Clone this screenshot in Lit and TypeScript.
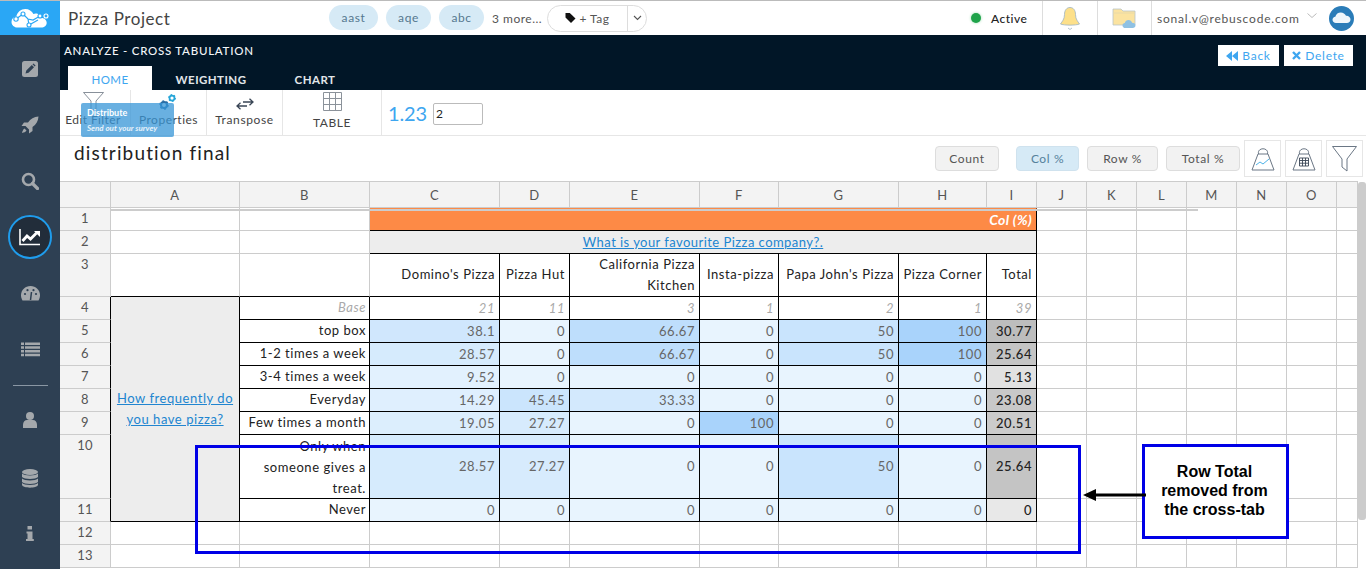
import { LitElement, html, css, svg } from "lit";
import { customElement } from "lit/decorators.js";

type Row = { n: number; label: string; vals: number[]; total: number };

const rows: Row[] = [
  { n: 5, label: "top box", vals: [38.1, 0, 66.67, 0, 50, 100], total: 30.77 },
  { n: 6, label: "1-2 times a week", vals: [28.57, 0, 66.67, 0, 50, 100], total: 25.64 },
  { n: 7, label: "3-4 times a week", vals: [9.52, 0, 0, 0, 0, 0], total: 5.13 },
  { n: 8, label: "Everyday", vals: [14.29, 45.45, 33.33, 0, 0, 0], total: 23.08 },
  { n: 9, label: "Few times a month", vals: [19.05, 27.27, 0, 100, 0, 0], total: 20.51 },
  { n: 10, label: "Only when someone gives a treat.", vals: [28.57, 27.27, 0, 0, 50, 0], total: 25.64 },
  { n: 11, label: "Never", vals: [0, 0, 0, 0, 0, 0], total: 0 },
];
const colHeads = ["A", "B", "C", "D", "E", "F", "G", "H", "I", "J", "K", "L", "M", "N", "O", ""];
const brands = ["Domino's Pizza", "Pizza Hut", "California Pizza Kitchen", "Insta-pizza", "Papa John's Pizza", "Pizza Corner", "Total"];
const bases = [21, 11, 3, 1, 2, 1, 39];

const blue = (v: number) => {
  const t = v / 100;
  const m = (a: number, b: number) => Math.round(a + (b - a) * t);
  return `background-color: rgb(${m(232, 169)},${m(244, 211)},${m(254, 251)})`;
};
const grey = (v: number) => {
  const g = Math.round(232 - v * 1.4);
  return `background-color: rgb(${g},${g},${g})`;
};

const blanks = (n: number) => Array.from({ length: n }, () => html`<div class="c"></div>`);

@customElement("app-root")
export class AppRoot extends LitElement {
  static styles = css`
    :host { display: block; width: 1366px; height: 569px; overflow: hidden; position: relative; font-family: "Lato", "Noto Sans", sans-serif; background: #fff; color: #333; }
    .app { display: flex; width: 1366px; height: 569px; }
    .side { width: 60px; flex: none; background: #2e4053; display: flex; flex-direction: column; align-items: center; }
    .logo { width: 60px; height: 35px; background: #2aa7f5; border-top: 1px solid #bbb; box-sizing: border-box; display: flex; align-items: center; justify-content: center; flex: none; }
    .nav { height: 56px; width: 60px; box-sizing: border-box; display: flex; align-items: center; justify-content: center; flex: none; }
    .nav svg { display: block; }
    .nav.first { margin-top: 6px; }
    .nav.db { padding-top: 4px; }
    .nav.info { padding-top: 2px; }
    .ring { width: 44px; height: 44px; border-radius: 50%; border: 2px solid #1f9cec; box-sizing: border-box; background: #222d3a; display: flex; align-items: center; justify-content: center; }
    .rule { width: 35px; height: 1px; background: #8a97a4; margin: 8px 0 6px; flex: none; }
    .main { width: 1306px; flex: none; display: flex; flex-direction: column; }

    .top { height: 35px; flex: none; box-sizing: border-box; border-top: 1px solid #bbb; display: flex; align-items: center; padding-left: 8px; }
    .proj { font-size: 17px; letter-spacing: 0.55px; color: #444; width: 261px; flex: none; }
    .chip { height: 25px; box-sizing: border-box; border-radius: 13px; background: #d6eaf6; color: #55788f; font-size: 12px; letter-spacing: 0.6px; display: flex; align-items: center; justify-content: center; margin-right: 8px; margin-top: -1px; flex: none; }
    .more { font-size: 12px; letter-spacing: 0.5px; color: #555; width: 55px; flex: none; }
    .tag { width: 100px; height: 27px; box-sizing: border-box; border: 1px solid #ddd; border-radius: 14px; display: flex; align-items: center; flex: none; }
    .tag-l { width: 79px; flex: none; border-right: 1px solid #ddd; height: 100%; display: flex; align-items: center; justify-content: center; gap: 3px; font-size: 12px; color: #555; letter-spacing: .5px; }
    .tag-r { flex: 1; display: flex; align-items: center; justify-content: center; }
    .status { margin-left: 324px; width: 71px; flex: none; height: 34px; display: flex; align-items: center; gap: 10px; font-size: 12px; color: #222; letter-spacing: .5px; font-weight: 500; }
    .dot { width: 10px; height: 10px; border-radius: 50%; background: #1fa34a; box-shadow: 0 0 3px #9ddbb0; }
    .tb-ic { height: 34px; display: flex; align-items: center; justify-content: center; border-left: 1px solid #ddd; flex: none; }
    .bell { width: 54px; }
    .folder { width: 53px; }
    .email { border-left: 1px solid #ddd; height: 34px; display: flex; align-items: center; padding-left: 5px; width: 170px; box-sizing: border-box; font-size: 12px; letter-spacing: .8px; color: #555; flex: none; gap: 7px; white-space: nowrap; }
    .email svg { flex: none; margin-top: -5px; }
    .avatar { margin-left: 8px; flex: none; display: block; }

    .dark { height: 55px; flex: none; background: #011627; display: flex; flex-direction: column; position: relative; }
    .dark-top { display: flex; justify-content: space-between; height: 31px; flex: none; }
    .crumb { color: #f2f5f8; font-size: 11.5px; letter-spacing: .75px; padding: 9px 0 0 4px; font-weight: 500; }
    .btns { display: flex; gap: 5px; padding: 10px 13px 0 0; }
    .btn { background: #fff; height: 21px; display: flex; align-items: center; justify-content: center; gap: 4px; color: #3ea6f0; font-size: 12px; letter-spacing: .7px; }
    .btn.back { width: 61px; }
    .btn.del { width: 69px; }
    .tabs { display: flex; padding-left: 8px; flex: none; }
    .tab { height: 24px; display: flex; align-items: center; justify-content: center; font-size: 11.5px; letter-spacing: .45px; color: #e2e6ea; font-weight: 700; box-sizing: border-box; padding-top: 2px; }
    .tab.on { background: #fff; color: #3ea6f0; width: 84px; font-weight: 400; }
    .tab.w { width: 118px; }
    .tab.ch { width: 90px; }

    .tools { height: 46px; flex: none; box-sizing: border-box; border-bottom: 1px solid #e6e6e6; display: flex; align-items: stretch; position: relative; }
    .tool { display: flex; flex-direction: column; align-items: center; justify-content: flex-end; box-sizing: border-box; border-right: 1px solid #e6e6e6; font-size: 12px; letter-spacing: .5px; color: #444; padding-bottom: 8px; flex: none; }
    .tool svg { display: block; }
    .t1 { width: 71px; padding-right: 4px; letter-spacing: .4px; }
    .t2 { width: 76px; }
    .t3 { width: 76px; gap: 2px; letter-spacing: .62px; }
    .t4 { width: 99px; padding-bottom: 5px; letter-spacing: .6px; gap: 4px; }
    .num { color: #3ea6f0; font-size: 20px; margin-left: 6px; align-self: center; width: 45px; letter-spacing: -.1px; }
    .inp { width: 50px; height: 22px; box-sizing: border-box; border: 1px solid #bbb; border-radius: 2px; align-self: center; font-size: 12px; color: #222; padding-left: 2px; display: flex; align-items: center; margin-top: 2px; background: #fff; }
    .tip { position: absolute; left: 21px; top: 13px; width: 93px; height: 34px; background: rgba(55,150,215,.75); border-radius: 2px; color: #fff; box-sizing: border-box; padding: 4px 6px; display: flex; flex-direction: column; justify-content: space-between; }
    .tip b { font-size: 9px; font-weight: 700; }
    .tip i { font-size: 8px; font-weight: 700; color: #e8f3fb; }
    .gears { position: absolute; left: 97px; top: 1px; display: block; }

    .title-row { height: 45px; flex: none; box-sizing: border-box; display: flex; align-items: flex-start; }
    .title { font-size: 19px; letter-spacing: 1.15px; color: #222; margin: 5px 0 0 14px; width: 861px; flex: none; }
    .pill { height: 25px; margin-top: 10px; box-sizing: border-box; border: 1px solid #ddd; border-radius: 4px; background: #f2f2f2; font-size: 12px; letter-spacing: .6px; color: #555; display: flex; align-items: center; justify-content: center; padding-bottom: 1px; flex: none; }
    .p-count { width: 64px; margin-right: 17px; }
    .p-col { width: 63px; margin-right: 8px; background: #d6eaf6; border-color: #cfe2ee; color: #55819c; }
    .p-row { width: 71px; margin-right: 8px; }
    .p-tot { width: 74px; margin-right: 4px; }
    .sq { width: 37px; height: 37px; margin: 4px 4px 0 0; box-sizing: border-box; border: 1px solid #e6e6e6; display: flex; align-items: center; justify-content: center; flex: none; }
    .sq.last { margin-right: 0; }

    .sheet { flex: 1; min-height: 0; overflow: hidden; display: grid; grid-template-columns: 51px 129px 130px 130px 70px 130px 79px 120px 88px 50px 50px 50px 50px 50px 50px 50px 21px; grid-auto-rows: 23px; grid-template-rows: 27px 23px 23px 43px repeat(6, 23px) 64px 23px 23px 23px 23px; width: 1298px; }
    .c, .h, .rn, .d, .lb { box-sizing: border-box; border-right: 1px solid #ccc; border-bottom: 1px solid #ccc; font-size: 13px; letter-spacing: .55px; }
    .h { background: #f3f3f3; border-top: 1px solid #ccc; display: flex; align-items: center; justify-content: center; color: #555; }
    .rn { background: #f3f3f3; color: #555; text-align: center; padding-top: 1px; line-height: 18px; letter-spacing: .3px; }
    .rn.bk { border-right-color: #000; }
    .d { border-color: #000; display: flex; align-items: center; justify-content: flex-end; padding: 0 4px 1px 0; color: #666; white-space: nowrap; }
    .lb { border-color: #000; display: flex; align-items: center; justify-content: flex-end; text-align: right; padding: 0 3px 1px 8px; color: #222; line-height: 21px; }
    .lb.tall { padding: 1px 3px 0 8px; }
    .bb { border-bottom-color: #000; }
    .orange { grid-column: span 7; background: #fd8a46; color: #fff; font-weight: 700; font-style: italic; border-right: 1px solid #000; border-bottom: 1px solid #000; border-top: 1px solid #fd8a46; display: flex; align-items: center; justify-content: flex-end; padding: 0 4px 0 0; font-size: 14px; box-sizing: border-box; letter-spacing: .35px; }
    .q { grid-column: span 7; background: #ededed; border-right: 1px solid #000; border-bottom: 1px solid #000; box-sizing: border-box; display: flex; align-items: center; justify-content: center; padding-bottom: 1px; font-size: 13px; letter-spacing: .45px; }
    a { color: #2185d0; text-decoration: underline; }
    .hd { color: #222; line-height: 21px; text-align: right; padding-left: 1px; white-space: normal; }
    .it { font-style: italic; color: #aaa; }
    .tot { color: #222; font-weight: 500; }
    .side-q { grid-row: span 8; background: #ededed; border-right: 1px solid #000; border-bottom: 1px solid #000; box-sizing: border-box; display: flex; align-items: center; justify-content: center; text-align: center; font-size: 13px; letter-spacing: .55px; line-height: 21px; padding: 0 3px; }

    .hline { position: absolute; left: 111px; top: 209px; width: 1087px; height: 2px; background: #ccc; }
    .scroll { position: absolute; left: 1358px; top: 182px; width: 8px; height: 338px; background: #ccc; border-radius: 3px; }
    .box { position: absolute; border: 3px solid #0000e6; box-sizing: border-box; }
    .b1 { left: 195px; top: 445px; width: 886px; height: 109px; }
    .b2 { left: 1142px; top: 444px; width: 147px; height: 95px; background: #fff; display: flex; align-items: center; justify-content: center; text-align: center; padding: 0 2px 2px 0; font: 700 16px/19px "Liberation Sans", Arial, sans-serif; color: #000; }
    .arrow { position: absolute; left: 1083px; top: 488px; display: block; }
  `;

  private gear(cx: number, cy: number, r: number, col: string) {
    return svg`<circle cx=${cx} cy=${cy} r=${r} fill="none" stroke=${col} stroke-width=${r * 0.7}/><circle cx=${cx} cy=${cy} r=${r * 1.35} fill="none" stroke=${col} stroke-width=${r * 0.45} stroke-dasharray="${r * 0.65} ${r * 0.75}"/>`;
  }

  private sidebar() {
    const g = "#a4a8ac";
    return html`<div class="side">
      <div class="logo">
        <svg width="40" height="22" viewBox="0 0 40 22">
          <path d="M8 20.5c-4 0-6.5-2.6-6.5-5.6 0-2.8 2-5 4.8-5.3C7.3 5 11 2 15.3 2c3.6 0 6.7 2 8.1 5 1-.5 2.1-.7 3.2-.5 2.4.4 4 2.2 4.5 4.4 3.3-.2 5.6 2.2 5.6 4.8 0 2.8-2.4 4.8-5.4 4.8z" fill="#fff"/>
          <path d="M6 12l7-5 5 5 5 1 7-4 8 0M18 12l1 6 9-5" fill="none" stroke="#2aa7f5" stroke-width="1.2"/>
          <circle cx="6" cy="12" r="2.2" fill="#fff" stroke="#2aa7f5" stroke-width="1.1"/><circle cx="13" cy="7" r="2" fill="#fff" stroke="#2aa7f5" stroke-width="1.1"/><circle cx="19" cy="18" r="2" fill="#fff" stroke="#2aa7f5" stroke-width="1.1"/><circle cx="30" cy="9" r="2" fill="#fff" stroke="#2aa7f5" stroke-width="1.1"/><circle cx="36" cy="9" r="2" fill="#2aa7f5" stroke="#fff" stroke-width="1.1"/>
        </svg>
      </div>
      <div class="nav first"><svg width="16" height="16" viewBox="0 0 16 16"><rect width="16" height="16" rx="2.5" fill=${g}/><path d="M3.5 12.5l.8-3 5.500-5.500 2.200 2.200-5.500 5.500zM10.500 3.300l.9-.9 2.200 2.200-.9.900z" fill="#2e4053"/></svg></div>
      <div class="nav"><svg width="18" height="18" viewBox="0 0 18 18"><path d="M17.500.5C13 .8 9.500 2.800 7 6.500H3L.5 10h4L8 13.500v4l3.500-2.500v-4C15.200 8.500 17.200 5 17.500.5zM3.500 12.500C2 13.500 1.500 15 1 17c2-.5 3.500-1 4.500-2.500z" fill=${g}/></svg></div>
      <div class="nav"><svg width="18" height="18" viewBox="0 0 18 18"><circle cx="7.5" cy="7.5" r="5.5" fill="none" stroke=${g} stroke-width="2.6"/><path d="M11.5 11.5l5 5" stroke=${g} stroke-width="3.2" stroke-linecap="round"/></svg></div>
      <div class="nav"><div class="ring"><svg width="22" height="18" viewBox="0 0 22 18"><path d="M1 1v15.500h20" fill="none" stroke="#fff" stroke-width="1.6"/><path d="M3.500 13l4.500-5 3.500 3 6-6" fill="none" stroke="#fff" stroke-width="2.8"/><path d="M15 3h6v6z" fill="#fff"/></svg></div></div>
      <div class="nav"><svg width="19" height="15" viewBox="0 0 19 15"><path d="M9.500 0C4.200 0 0 4 0 9.300c0 2 .6 3.800 1.500 5.200h16c.9-1.400 1.500-3.200 1.500-5.200C19 4 14.800 0 9.500 0z" fill=${g}/><path d="M9.500 14l1-8" stroke="#2e4053" stroke-width="1.5"/><circle cx="4" cy="8" r="1.1" fill="#2e4053"/><circle cx="6.5" cy="4.2" r="1.1" fill="#2e4053"/><circle cx="12.5" cy="4.2" r="1.1" fill="#2e4053"/><circle cx="15" cy="8" r="1.1" fill="#2e4053"/></svg></div>
      <div class="nav"><svg width="19" height="15" viewBox="0 0 19 15"><path d="M0 .5h3v2.500H0zM4 .5h15v2.500H4zM0 4.200h3v2.500H0zM4 4.200h15v2.500H4zM0 8h3v2.500H0zM4 8h15v2.500H4zM0 11.800h3v2.500H0zM4 11.800h15v2.500H4z" fill=${g}/></svg></div>
      <div class="rule"></div>
      <div class="nav"><svg width="14" height="16" viewBox="0 0 14 16"><circle cx="7" cy="4" r="4" fill=${g}/><path d="M0 16v-3.500C0 9.800 2 8 4 8h6c2 0 4 1.800 4 4.500V16z" fill=${g}/></svg></div>
      <div class="nav db"><svg width="16" height="19" viewBox="0 0 16 19"><ellipse cx="8" cy="3" rx="8" ry="3" fill=${g}/><path d="M0 4.500c2 2.500 14 2.500 16 0V8c-2 2.500-14 2.500-16 0zM0 9.500c2 2.500 14 2.500 16 0V13c-2 2.500-14 2.500-16 0zM0 14c2 2.500 14 2.500 16 0v2c-1 3.500-15 3.500-16 0z" fill=${g}/></svg></div>
      <div class="nav info"><svg width="8" height="15" viewBox="0 0 8 15"><rect x="1.5" width="4.500" height="3.500" fill=${g}/><path d="M.5 5.500h6v7.500h1.300V15H0v-2h1.500V7.500h-1z" fill=${g}/></svg></div>
    </div>`;
  }

  private topbar() {
    return html`<div class="top">
      <div class="proj">Pizza Project</div>
      <div class="chip" style="width:49px">aast</div>
      <div class="chip" style="width:45px">aqe</div>
      <div class="chip" style="width:45px">abc</div>
      <div class="more">3 more...</div>
      <div class="tag">
        <div class="tag-l"><svg width="11" height="10" viewBox="0 0 11 10"><path d="M.5 0h4.300L10.500 5.500 6 10 .5 4.500z" fill="#111"/></svg>+ Tag</div>
        <div class="tag-r"><svg width="9" height="6" viewBox="0 0 9 6"><path d="M1 1l3.500 3.500L8 1" fill="none" stroke="#555" stroke-width="1.1"/></svg></div>
      </div>
      <div class="status"><span class="dot"></span>Active</div>
      <div class="tb-ic bell"><svg width="20" height="24" viewBox="0 0 20 24"><path d="M10 1.500c-3.500 0-5.500 3-5.500 7 0 5-2.500 7-4 9.500 3 1.500 16 1.500 19 0-1.500-2.500-4-4.500-4-9.500 0-4-2-7-5.500-7z" fill="#fde08a" stroke="#9db2c2" stroke-width=".8"/><path d="M8 22l2 1.500 2-1.500" fill="none" stroke="#9db2c2" stroke-width=".8"/></svg></div>
      <div class="tb-ic folder"><svg width="25" height="22" viewBox="0 0 25 22"><path d="M1 2h8l2 2h12v14H1z" fill="#fbe3a0" stroke="#b9c4c8" stroke-width=".8"/><path d="M1 6h22" stroke="#e8d9a8"/><path d="M13.500 21c-2 0-3-1.300-3-2.600 0-1.300 1-2.400 2.300-2.500.4-2 2-3 3.700-3 1.800 0 3.200 1.200 3.600 2.800 2-.1 3.400 1.200 3.400 2.800 0 1.500-1.200 2.500-2.800 2.500z" fill="#8fc1e3"/></svg></div>
      <div class="email">sonal.v@rebuscode.com<svg width="10" height="6" viewBox="0 0 10 6"><path d="M.5.5L5 4.500 9.500.5" fill="none" stroke="#bbb"/></svg></div>
      <svg class="avatar" width="25" height="25" viewBox="0 0 25 25"><circle cx="12.5" cy="12.5" r="12.5" fill="#2a7cb8"/><path d="M7 17c-2 0-3.500-1.500-3.500-3.200 0-1.600 1.200-3 2.800-3.100C7 8 9.200 6.500 11.800 6.500c2.400 0 4.300 1.300 5.200 3.300 2.600-.2 4.500 1.700 4.500 3.700 0 2-1.600 3.500-3.600 3.500z" fill="#eef6fb"/></svg>
    </div>`;
  }

  private darkbar() {
    return html`<div class="dark">
      <div class="dark-top">
        <div class="crumb">ANALYZE - CROSS TABULATION</div>
        <div class="btns">
          <div class="btn back"><svg width="12" height="10" viewBox="0 0 12 10"><path d="M6 0v10L0 5zM12 0v10L6 5z" fill="#3ea6f0"/></svg>Back</div>
          <div class="btn del"><svg width="9" height="9" viewBox="0 0 9 9"><path d="M1 1l7 7M8 1L1 8" stroke="#3ea6f0" stroke-width="2.4"/></svg>Delete</div>
        </div>
      </div>
      <div class="tabs"><div class="tab on">HOME</div><div class="tab w">WEIGHTING</div><div class="tab ch">CHART</div></div>
    </div>`;
  }

  private toolbar() {
    return html`<div class="tools">
      <div class="tool t1"><svg width="21" height="20" viewBox="0 0 21 20"><path d="M.5.5h20L13 9v8l-5 2V9z" fill="none" stroke="#6a7480" stroke-width=".8"/></svg>Edit Filter</div>
      <div class="tool t2">Properties</div>
      <div class="tool t3"><svg width="18" height="12" viewBox="0 0 18 12"><path d="M7 4h10M13.500.8L17 4l-3.500 3.200M1 8h10M4.500 4.800L1 8l3.500 3.200" fill="none" stroke="#3a4656" stroke-width="1.3"/></svg>Transpose</div>
      <div class="tool t4"><svg width="19" height="19" viewBox="0 0 19 19"><path d="M.5.5h18v18H.5zM6.500.5v18M12.500.5v18M.5 6.500h18M.5 12.500h18" fill="none" stroke="#8b929a"/></svg>TABLE</div>
      <div class="num">1.23</div>
      <div class="inp">2</div>
      <svg class="gears" width="24" height="20" viewBox="0 0 24 20">${this.gear(7, 14, 3, "#2b6fa6")}${this.gear(15, 7, 2.5, "#27a6d8")}</svg>
      <div class="tip"><b>Distribute</b><i>Send out your survey</i></div>
    </div>`;
  }

  private titleRow() {
    const s = "#6b7785";
    return html`<div class="title-row">
      <div class="title">distribution final</div>
      <div class="pill p-count">Count</div>
      <div class="pill p-col">Col %</div>
      <div class="pill p-row">Row %</div>
      <div class="pill p-tot">Total %</div>
      <div class="sq"><svg width="24" height="25" viewBox="0 0 24 25"><path d="M7 8h10l6 16H1z" fill="none" stroke=${s}/><path d="M7.500 8C6 1 18 1 16.500 8" fill="none" stroke=${s}/><path d="M5 19l4-3 3 2 6-5" fill="none" stroke="#4fb3e8"/></svg></div>
      <div class="sq"><svg width="24" height="25" viewBox="0 0 24 25"><path d="M7 8h10l6 16H1z" fill="none" stroke=${s}/><path d="M7.500 8C6 1 18 1 16.500 8" fill="none" stroke=${s}/><path d="M7.500 12h9v8h-9zM7.500 14.500h9M7.500 17.200h9M10.500 12v8M13.500 12v8" fill="none" stroke="#3a4656" stroke-width=".9"/></svg></div>
      <div class="sq last"><svg width="25" height="26" viewBox="0 0 25 26"><path d="M.5.5h24L15 13v12l-5-4v-8z" fill="none" stroke=${s}/></svg></div>
    </div>`;
  }

  private sheet() {
    return html`<div class="sheet">
      <div class="h"></div>
      ${colHeads.map((c) => html`<div class="h">${c}</div>`)}

      <div class="rn">1</div><div class="c"></div><div class="c"></div>
      <div class="orange">Col (%)</div>${blanks(7)}

      <div class="rn">2</div><div class="c"></div><div class="c"></div>
      <div class="q"><a>What is your favourite Pizza company?.</a></div>${blanks(7)}

      <div class="rn">3</div><div class="c bb"></div><div class="c bb"></div>
      ${brands.map((b) => html`<div class="d hd">${b}</div>`)}${blanks(7)}

      <div class="rn bk">4</div>
      <div class="side-q"><a>How frequently do you have pizza?</a></div>
      <div class="lb it">Base</div>
      ${bases.map((b) => html`<div class="d it">${b}</div>`)}${blanks(7)}

      ${rows.map(
        (r) => html`<div class="rn bk">${r.n}</div>
          <div class="lb ${r.n === 10 ? "tall" : ""}">${r.label}</div>
          ${r.vals.map((v) => html`<div class="d" style=${blue(v)}>${v}</div>`)}
          <div class="d tot" style=${grey(r.total)}>${r.total}</div>
          ${blanks(7)}`
      )}

      <div class="rn">12</div>${blanks(16)}
      <div class="rn">13</div>${blanks(16)}
    </div>`;
  }

  render() {
    return html`<div class="app">
        ${this.sidebar()}
        <div class="main">${this.topbar()}${this.darkbar()}${this.toolbar()}${this.titleRow()}${this.sheet()}</div>
      </div>
      <div class="hline"></div>
      <div class="scroll"></div>
      <div class="box b1"></div>
      <div class="box b2"><span>Row Total<br />removed from<br />the cross-tab</span></div>
      <svg class="arrow" width="64" height="14" viewBox="0 0 64 14"><path d="M12 7h51" stroke="#000" stroke-width="3"/><path d="M0 7l13-6v12z" fill="#000"/></svg>`;
  }
}
